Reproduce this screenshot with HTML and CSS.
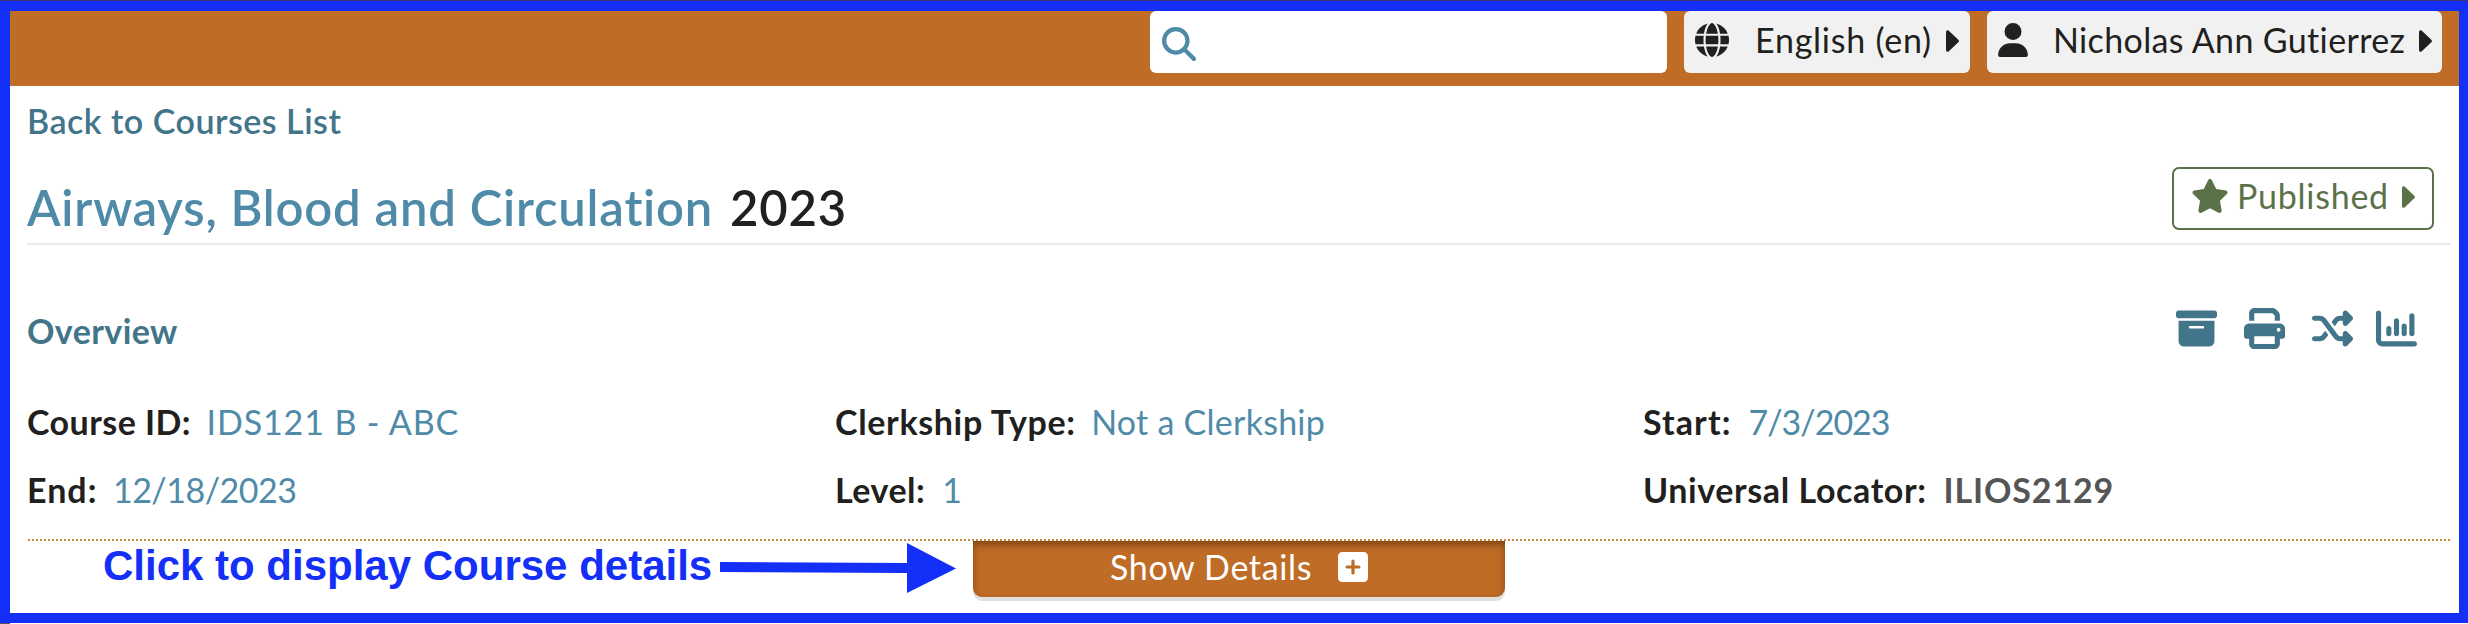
FILE: index.html
```html
<!DOCTYPE html>
<html lang="en">
<head>
<meta charset="utf-8">
<title>Airways, Blood and Circulation</title>
<link rel="stylesheet" href="styles.css">
</head>
<body>
<header class="topbar">
  <div class="search">
    <svg class="icon-search" viewBox="0 0 512 512"><path d="M416 208c0 45.900-14.900 88.300-40 122.700L502.600 457.400c12.500 12.500 12.500 32.800 0 45.300s-32.800 12.500-45.300 0L330.700 376c-34.400 25.200-76.800 40-122.700 40C93.100 416 0 322.900 0 208S93.100 0 208 0S416 93.100 416 208zM208 352a144 144 0 1 0 0-288 144 144 0 1 0 0 288z"/></svg>
  </div>
  <button class="chip chip-locale">
    <svg class="icon-globe" viewBox="0 0 512 512"><path d="M352 256c0 22.200-1.200 43.600-3.300 64H163.300c-2.200-20.400-3.300-41.800-3.300-64s1.200-43.600 3.300-64H348.700c2.200 20.400 3.300 41.800 3.300 64zm28.800-64H503.900c5.300 20.500 8.100 41.900 8.100 64s-2.800 43.500-8.100 64H380.800c2.100-20.600 3.200-42 3.200-64s-1.100-43.400-3.200-64zm112.600-32H376.700c-10-63.900-29.800-117.400-55.300-151.600c78.300 20.700 142 77.500 171.900 151.600zm-149.100 0H167.700c6.100-36.400 15.500-68.600 27-94.700c10.500-23.600 22.200-40.700 33.500-51.500C239.400 3.200 248.700 0 256 0s16.600 3.200 27.800 13.800c11.300 10.800 23 27.900 33.500 51.500c11.600 26 20.900 58.200 27 94.700zm-209 0H18.600C48.600 85.900 112.200 29.100 190.600 8.400C165.100 42.600 145.300 96.100 135.300 160zM8.100 192H131.200c-2.100 20.600-3.200 42-3.200 64s1.100 43.400 3.200 64H8.100C2.800 299.500 0 278.100 0 256s2.800-43.500 8.100-64zM194.700 446.600c-11.600-26-20.900-58.200-27-94.600H344.300c-6.100 36.400-15.500 68.600-27 94.600c-10.500 23.600-22.200 40.700-33.500 51.500C272.600 508.800 263.300 512 256 512s-16.600-3.200-27.800-13.800c-11.300-10.800-23-27.900-33.500-51.500zM135.300 352c10 63.900 29.800 117.400 55.300 151.600C112.200 482.900 48.600 426.100 18.600 352H135.300zm358.100 0c-30 74.100-93.600 130.900-171.900 151.600c25.500-34.200 45.200-87.700 55.300-151.600H493.400z"/></svg>
    <span class="t-locale">English (en)</span>
    <svg class="caret" viewBox="0 0 13 22"><path d="M0 2C0 .4 1.600-.4 2.800.7L12.300 9.700c.9.800.9 1.800 0 2.600L2.800 21.300C1.600 22.400 0 21.600 0 20z"/></svg>
  </button>
  <button class="chip chip-user">
    <svg class="icon-user" viewBox="0 0 448 512"><path d="M224 256A128 128 0 1 0 224 0a128 128 0 1 0 0 256zm-45.700 48C79.800 304 0 383.800 0 482.300C0 498.700 13.300 512 29.700 512H418.300c16.400 0 29.700-13.300 29.700-29.700C448 383.800 368.200 304 269.700 304H178.300z"/></svg>
    <span class="t-user">Nicholas Ann Gutierrez</span>
    <svg class="caret" viewBox="0 0 13 22"><path d="M0 2C0 .4 1.600-.4 2.800.7L12.300 9.700c.9.800.9 1.800 0 2.600L2.800 21.300C1.600 22.400 0 21.600 0 20z"/></svg>
  </button>
</header>

<main class="course">
  <a class="back"><span class="t-back">Back to Courses List</span></a>
  <div class="title-row">
    <h1 class="title"><span class="t-title">Airways, Blood and Circulation</span><span class="t-year">2023</span></h1>
    <button class="published">
      <svg class="icon-star" viewBox="24 0 528 512"><path d="M316.900 18C311.600 7 300.400 0 288.100 0s-23.400 7-28.800 18L195 150.300 51.400 171.500c-12 1.800-22 10.200-25.700 21.700s-.7 24.200 7.900 32.700L137.800 329 113.200 474.700c-2 12 3 24.200 12.900 31.300s23 8 33.800 2.300l128.300-68.500 128.300 68.500c10.800 5.700 23.900 4.900 33.800-2.300s14.900-19.300 12.900-31.300L438.500 329 542.700 225.900c8.600-8.500 11.700-21.200 7.900-32.700s-13.700-19.900-25.700-21.700L381.200 150.300 316.900 18z"/></svg>
      <span class="t-published">Published</span>
      <svg class="caret" viewBox="0 0 13 22"><path d="M0 2C0 .4 1.600-.4 2.800.7L12.300 9.700c.9.800.9 1.800 0 2.600L2.800 21.300C1.600 22.400 0 21.600 0 20z"/></svg>
    </button>
  </div>

  <section class="overview">
    <div class="overview-head">
      <h2 class="overview-title">Overview</h2>
      <div class="tools">
        <svg viewBox="0 0 512 512"><path d="M32 32H480c17.700 0 32 14.300 32 32V96c0 17.700-14.300 32-32 32H32C14.300 128 0 113.700 0 96V64C0 46.300 14.300 32 32 32zm0 128H480V416c0 35.300-28.700 64-64 64H96c-35.300 0-64-28.700-64-64V160zm128 80c0 8.800 7.200 16 16 16H336c8.800 0 16-7.200 16-16s-7.200-16-16-16H176c-8.800 0-16 7.200-16 16z"/></svg>
        <svg viewBox="0 0 512 512"><path d="M128 0C92.700 0 64 28.700 64 64v96h64V64H354.700L384 93.300V160h64V93.300c0-17-6.700-33.300-18.700-45.300L400 18.700C388 6.700 371.700 0 354.700 0H128zM384 352v32 64H128V384 368 352H384zm64 32h32c17.700 0 32-14.300 32-32V256c0-35.300-28.700-64-64-64H64c-35.300 0-64 28.700-64 64v96c0 17.700 14.300 32 32 32H64v64c0 35.300 28.700 64 64 64H384c35.300 0 64-28.700 64-64V384zM432 248a24 24 0 1 1 0 48 24 24 0 1 1 0-48z"/></svg>
        <svg viewBox="0 0 512 512"><path d="M403.800 34.400c12-5 25.700-2.200 34.900 6.900l64 64c6 6 9.400 14.100 9.400 22.600s-3.400 16.600-9.400 22.600l-64 64c-9.200 9.200-22.900 11.900-34.900 6.900s-19.800-16.600-19.800-29.600V160H352c-10.100 0-19.600 4.700-25.600 12.800L284 229.300 244 176l31.200-41.600C293.300 110.200 321.800 96 352 96h32V64c0-12.900 7.800-24.600 19.800-29.600zM164 282.700L204 336l-31.200 41.600C154.700 401.800 126.200 416 96 416H32c-17.700 0-32-14.300-32-32s14.300-32 32-32H96c10.100 0 19.600-4.700 25.600-12.800L164 282.700zm274.600 188c-9.200 9.200-22.900 11.900-34.900 6.900s-19.800-16.600-19.800-29.600V416H352c-30.200 0-58.700-14.200-76.800-38.400L121.600 172.800c-6-8.100-15.500-12.800-25.600-12.800H32c-17.700 0-32-14.300-32-32s14.300-32 32-32H96c30.200 0 58.700 14.200 76.800 38.400L326.400 339.200c6 8.100 15.500 12.800 25.600 12.800h32V320c0-12.900 7.800-24.600 19.800-29.600s25.700-2.200 34.900 6.900l64 64c6 6 9.400 14.100 9.400 22.600s-3.400 16.600-9.400 22.600l-64 64z"/></svg>
        <svg viewBox="0 0 512 512"><path d="M32 32c17.700 0 32 14.300 32 32V400c0 8.800 7.200 16 16 16H480c17.700 0 32 14.300 32 32s-14.300 32-32 32H80c-44.200 0-80-35.800-80-80V64C0 46.300 14.300 32 32 32zM160 224c17.700 0 32 14.300 32 32v64c0 17.700-14.300 32-32 32s-32-14.300-32-32V256c0-17.700 14.300-32 32-32zm128-64V320c0 17.700-14.300 32-32 32s-32-14.300-32-32V160c0-17.700 14.300-32 32-32s32 14.300 32 32zm64 32c17.700 0 32 14.300 32 32v96c0 17.700-14.300 32-32 32s-32-14.300-32-32V224c0-17.700 14.300-32 32-32zM480 96V320c0 17.700-14.300 32-32 32s-32-14.300-32-32V96c0-17.700 14.300-32 32-32s32 14.300 32 32z"/></svg>
      </div>
    </div>
    <dl class="facts">
      <div class="fact fact-id"><dt>Course ID:</dt><dd>IDS121 B - ABC</dd></div>
      <div class="fact fact-clerkship"><dt>Clerkship Type:</dt><dd>Not a Clerkship</dd></div>
      <div class="fact fact-start"><dt>Start:</dt><dd>7/3/2023</dd></div>
      <div class="fact fact-end"><dt>End:</dt><dd>12/18/2023</dd></div>
      <div class="fact fact-level"><dt>Level:</dt><dd>1</dd></div>
      <div class="fact fact-locator"><dt>Universal Locator:</dt><dd class="locked">ILIOS2129</dd></div>
    </dl>
  </section>

  <div class="details-row">
    <button class="show-details">
      <span class="t-show">Show Details</span>
      <svg class="icon-plus" viewBox="0 32 448 448"><path d="M64 32C28.700 32 0 60.700 0 96V416c0 35.300 28.700 64 64 64H384c35.300 0 64-28.700 64-64V96c0-35.300-28.700-64-64-64H64zM200 344V280H136c-13.300 0-24-10.700-24-24s10.700-24 24-24h64V168c0-13.300 10.700-24 24-24s24 10.700 24 24v64h64c13.300 0 24 10.700 24 24s-10.700 24-24 24H248v64c0 13.300-10.700 24-24 24s-24-10.700-24-24z"/></svg>
    </button>
  </div>
</main>

<div class="callout">
  <span class="t-callout">Click to display Course details</span>
  <svg class="arrow" viewBox="0 0 236 50"><path d="M0 19 187 20V0L236 25.500 187 50V30L0 29z"/></svg>
</div>
<div class="frame"></div>
</body>
</html>
```
FILE: styles.css
```css
* { box-sizing: border-box; }
body {
  margin: 0;
  width: 2468px;
  height: 624px;
  overflow: hidden;
  background: #fff;
  color: #211f20;
  font-family: Lato, "Open Sans", sans-serif;
  font-size: 34px;
  line-height: 40px;
  font-variant-ligatures: none;
}
button { font: inherit; font-variant-ligatures: none; color: inherit; margin: 0; padding: 0; border: 0; text-align: left; }
h1, h2, dl, dd { margin: 0; }
span, dt, dd { white-space: nowrap; }
svg { display: block; fill: currentColor; flex: none; }

/* top bar */
.topbar {
  display: flex;
  justify-content: flex-end;
  height: 86px;
  padding: 11px 26px 13px 0;
  background: #bf6c26;
}
.search { width: 517px; margin-right: 17px; padding: 16px 12px; border-radius: 6px; background: #fff; color: #4f8ba8; }
.icon-search { width: 34px; height: 34px; }
.chip { display: flex; align-items: flex-start; padding: 9px 10px 0 11px; border-radius: 6px; background: #f1f1f1; }
.chip-locale { width: 286px; margin-right: 17px; padding-right: 11px; }
.chip-user { width: 455px; }
.t-locale { letter-spacing: .75px; }
.t-user { letter-spacing: .36px; }
.icon-globe { width: 34px; height: 34px; margin: 3px 26px 0 0; }
.icon-user { width: 30px; height: 34px; margin: 3px 25px 0 0; }
.caret { width: 13px; height: 22px; margin: 10px 0 0 auto; }

/* title */
.course { padding: 0 17px 0 27px; }
.back { display: block; height: 68px; padding-top: 15px; color: #42748a; font-weight: 600; letter-spacing: .5px; }
.title-row { display: flex; justify-content: space-between; height: 91px; padding: 13px 17px 0 0; border-bottom: 2px solid #e7ecec; }
.title { display: flex; gap: 17px; padding-top: 10px; font-size: 49px; line-height: 60px; font-weight: 600; }
.t-title { color: #4f8ba8; letter-spacing: .8px; }
.t-year { letter-spacing: .8px; }
.published { display: flex; width: 262px; height: 63px; padding: 7px 17px 0 18px; border: 2px solid #5b7249; border-radius: 7px; background: #fff; color: #5b7249; }
.t-published { letter-spacing: .75px; }
.icon-star { width: 36px; height: 34px; margin: 3px 9px 0 0; }
.published .caret { margin-top: 10px; }

/* overview */
.overview-head { display: flex; justify-content: space-between; height: 145px; padding: 63px 34px 0 0; color: #42748a; }
.overview-title { padding-top: 3px; font-size: 34px; line-height: 40px; font-weight: 700; letter-spacing: .4px; }
.tools { display: flex; gap: 27px; }
.tools svg { width: 41px; height: 41px; }
.tools svg:last-child { margin-left: -4px; }
.facts { display: grid; grid-template-columns: repeat(3, 808px); grid-auto-rows: 68px; height: 149px; padding-top: 12px; }
.fact { display: flex; gap: 17px; }
.fact dt { font-weight: 700; }
.fact dd { color: #4f8ba8; }
.fact .locked { color: #555; font-weight: 700; }
.fact-id, .fact-clerkship, .fact-end { gap: 15.5px; }
.fact-id dt { letter-spacing: .45px; }
.fact-id dd { letter-spacing: .88px; }
.fact-clerkship dt { letter-spacing: .65px; }
.fact-clerkship dd { letter-spacing: .25px; }
.fact-start dt { letter-spacing: 1.1px; }
.fact-start dd { letter-spacing: -1px; }
.fact-end dt { letter-spacing: 1px; }
.fact-end dd { letter-spacing: -.5px; }
.fact-level dt { letter-spacing: .5px; }
.fact-locator dt { letter-spacing: .6px; }
.fact-locator dd { letter-spacing: .85px; }

/* expander */
.details-row {
  display: flex;
  justify-content: center;
  padding-top: 2px;
  background: repeating-linear-gradient(90deg, #c98842 0 2px, transparent 2px 4px) 1px 0 / 100% 2px no-repeat;
}
.show-details {
  display: flex;
  width: 532px;
  height: 56px;
  padding: 6px 0 0 137px;
  border-radius: 0 0 9px 9px;
  background: #bf6c26;
  color: #fff;
  box-shadow: 0 4px 0 #e0e0e0, inset 0 4px 8px -1px rgba(70, 35, 0, .6);
}
.t-show { width: 201px; letter-spacing: .65px; }
.icon-plus { width: 30px; height: 30px; margin: 5px 0 0 27px; }

/* callout drawn over the page */
.callout { position: absolute; left: 103px; top: 543px; display: flex; color: #142ff8; }
.t-callout { width: 617px; font: 700 42px/46px "Liberation Sans", Arial, sans-serif; }
.arrow { width: 236px; height: 50px; }
.frame { position: absolute; inset: 0 0 1px; border: solid #142ff8; border-width: 11px 9px 10px 10px; pointer-events: none; }
.frame::before { content: ""; position: absolute; left: -10px; right: -9px; top: -11px; height: 1px; background: #3b3368; }
.frame::after { content: ""; position: absolute; left: -10px; bottom: -11px; width: 10px; height: 1px; background: #555063; }
```
